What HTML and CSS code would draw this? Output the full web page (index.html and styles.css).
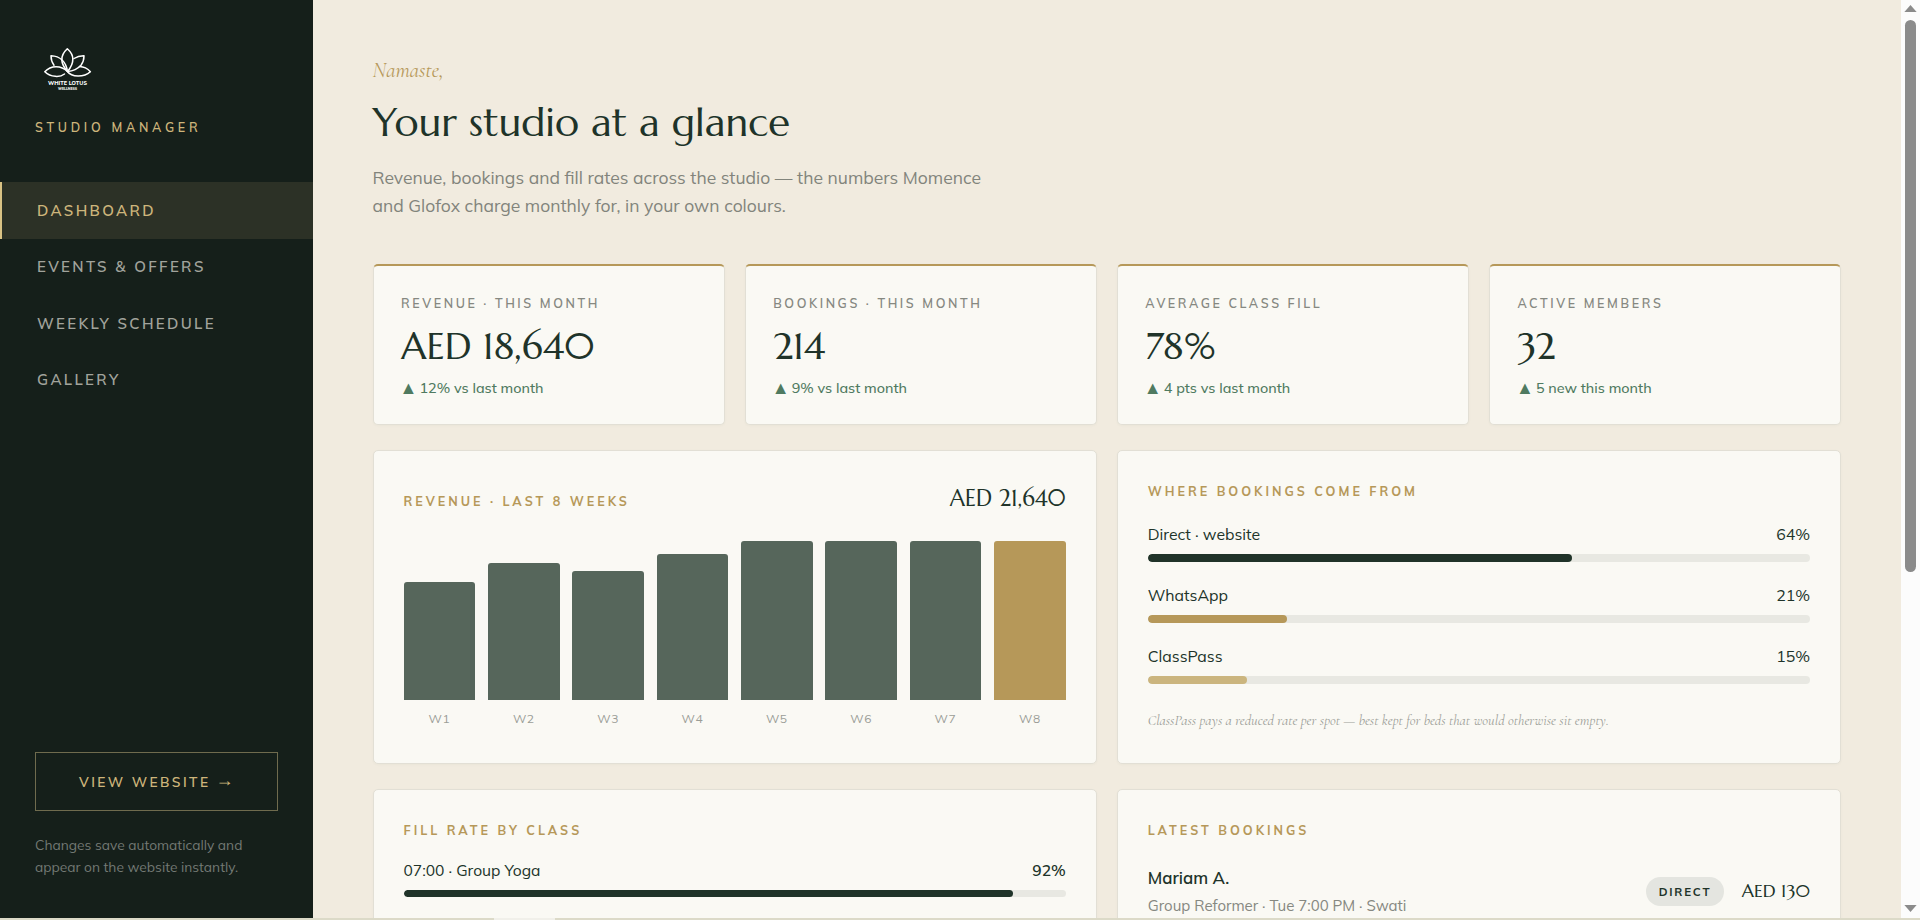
FILE: index.html
```html
<!DOCTYPE html>
<html lang="en">
<head>
<meta charset="utf-8">
<title>Studio Manager</title>
<link rel="stylesheet" href="styles.css">
</head>
<body>
<div class="app">
  <aside class="sidebar">
    <svg class="logo" viewBox="0 0 64 56" fill="none" stroke="#fff" stroke-width="1.5" stroke-linejoin="round" stroke-linecap="round">
      <path d="M32.500 34.500C25 26 25.500 18 32.300 11.700C39.500 18 39.500 26 32.500 34.500"/>
      <path d="M19 28.200C17 25.500 16 22.500 16 18.700C25 19 31 25 32.500 34.500"/>
      <path d="M39 21.500C42 19.500 45.500 18.600 49 18.700C49 22.500 48 25.500 46 28.200C42.500 32 38 34 32.500 34.500"/>
      <path d="M32.500 34.500C26 28 16 28 9.800 34.700C16 40.500 25 40.500 29.500 37"/>
      <path d="M32.500 34.500C36.500 40.500 49 40.500 55.400 34.700C52 31 48.500 29.800 44.500 29.600"/>
      <text class="logo-name" x="32.500" y="48" textLength="39">WHITE LOTUS</text>
      <text class="logo-tag" x="32.500" y="53" textLength="19">WELLNESS</text>
    </svg>
    <p class="brand-sub">STUDIO MANAGER</p>
    <nav class="nav">
      <a class="nav-item active">DASHBOARD</a>
      <a class="nav-item">EVENTS &amp; OFFERS</a>
      <a class="nav-item">WEEKLY SCHEDULE</a>
      <a class="nav-item">GALLERY</a>
    </nav>
    <div class="side-foot">
      <a class="view-btn">VIEW WEBSITE <span class="go">→</span></a>
      <p class="side-note">Changes save automatically and<br>appear on the website instantly.</p>
    </div>
  </aside>
  <main class="main">
    <p class="hello">Namaste,</p>
    <h1 class="title">Your studio at a glance</h1>
    <p class="intro">Revenue, bookings and fill rates across the studio — the numbers Momence<br>and Glofox charge monthly for, in your own colours.</p>
    <section class="stats">
      <article class="stat"><p class="stat-label">REVENUE · THIS MONTH</p><p class="stat-value">AED 18,640</p><p class="stat-delta"><span class="up">▲</span>12% vs last month</p></article>
      <article class="stat"><p class="stat-label">BOOKINGS · THIS MONTH</p><p class="stat-value">214</p><p class="stat-delta"><span class="up">▲</span>9% vs last month</p></article>
      <article class="stat"><p class="stat-label">AVERAGE CLASS FILL</p><p class="stat-value">78%</p><p class="stat-delta"><span class="up">▲</span>4 pts vs last month</p></article>
      <article class="stat"><p class="stat-label">ACTIVE MEMBERS</p><p class="stat-value">32</p><p class="stat-delta"><span class="up">▲</span>5 new this month</p></article>
    </section>
    <section class="panels">
      <article class="panel">
        <header class="chart-head"><h2 class="panel-title">REVENUE · LAST 8 WEEKS</h2><p class="chart-total">AED 21,640</p></header>
        <div class="bars">
          <div class="bar" style="height:118px"></div>
          <div class="bar" style="height:137px"></div>
          <div class="bar" style="height:129px"></div>
          <div class="bar" style="height:146px"></div>
          <div class="bar" style="height:159px"></div>
          <div class="bar" style="height:159px"></div>
          <div class="bar" style="height:159px"></div>
          <div class="bar current" style="height:159px"></div>
        </div>
        <div class="weeks"><p>W1</p><p>W2</p><p>W3</p><p>W4</p><p>W5</p><p>W6</p><p>W7</p><p>W8</p></div>
      </article>
      <article class="panel">
        <h2 class="panel-title">WHERE BOOKINGS COME FROM</h2>
        <div class="meter"><div class="meter-head"><span>Direct · website</span><span>64%</span></div><div class="track"><div class="fill" style="width:64%"></div></div></div>
        <div class="meter"><div class="meter-head"><span>WhatsApp</span><span>21%</span></div><div class="track"><div class="fill gold" style="width:21%"></div></div></div>
        <div class="meter"><div class="meter-head"><span>ClassPass</span><span>15%</span></div><div class="track"><div class="fill sand" style="width:15%"></div></div></div>
        <p class="remark">ClassPass pays a reduced rate per spot — best kept for beds that would otherwise sit empty.</p>
      </article>
      <article class="panel">
        <h2 class="panel-title">FILL RATE BY CLASS</h2>
        <div class="meter compact"><div class="meter-head"><span>07:00 · Group Yoga</span><span class="strong">92%</span></div><div class="track"><div class="fill" style="width:92%"></div></div></div>
      </article>
      <article class="panel">
        <h2 class="panel-title">LATEST BOOKINGS</h2>
        <div class="booking">
          <div class="who"><p class="who-name">Mariam A.</p><p class="who-info">Group Reformer · Tue 7:00 PM · Swati</p></div>
          <span class="pill">DIRECT</span>
          <span class="amount">AED 130</span>
        </div>
      </article>
    </section>
  </main>
  <div class="scroll">
    <svg class="arrow" viewBox="0 0 14 8"><path d="M0 8L7 0L14 8Z" fill="#8b8b8b"/></svg>
    <div class="thumb"></div>
    <svg class="arrow down" viewBox="0 0 14 8"><path d="M0 0L7 8L14 0Z" fill="#8b8b8b"/></svg>
  </div>
</div>
<div class="edge"><div class="edge-gap"></div></div>
</body>
</html>
```
FILE: styles.css
```css
* { box-sizing: border-box; margin: 0; padding: 0; }
body { width: 1920px; height: 920px; overflow: hidden; background: #f1ebdf; color: #203329; font-family: "Mulish", "Noto Sans", sans-serif; }
.app { display: flex; height: 918px; overflow: hidden; }

.sidebar { width: 312.5px; flex: none; background: #151f1a; display: flex; flex-direction: column; padding-top: 37px; }
.logo { width: 64px; height: 56px; margin-left: 35px; flex: none; }
.logo text { fill: #fff; stroke: none; text-anchor: middle; font-family: "Mulish", sans-serif; font-weight: 800; }
.logo-name { font-size: 5.5px; }
.logo-tag { font-size: 3.5px; }
.brand-sub { margin: 24px 0 0 35px; font-size: 12.5px; line-height: 20px; letter-spacing: 3.72px; font-weight: 650; color: #cdb57b; }
.nav { margin-top: 45px; display: flex; flex-direction: column; }
.nav-item { height: 56.5px; padding-left: 35px; border-left: 2px solid transparent; display: flex; align-items: center; font-size: 15px; font-weight: 650; letter-spacing: 2.35px; color: #a1a39c; }
.nav-item.active { background: #2c3126; border-left-color: #d9c284; color: #cdb57b; }
.side-foot { margin-top: auto; padding: 0 35px 40px; }
.view-btn { height: 59px; border: 1px solid #6f6b4e; display: flex; align-items: center; justify-content: center; gap: 5px; font-size: 13.75px; font-weight: 650; letter-spacing: 2.42px; color: #cdb57b; white-space: nowrap; }
.go { font-size: 18px; line-height: 20px; letter-spacing: 0; font-weight: 500; padding-bottom: 3px; }
.side-note { margin-top: 23px; font-size: 13.75px; line-height: 22px; color: #737974; white-space: nowrap; }

.main { flex: 1; padding: 55.5px 60px 0; height: 918px; overflow: hidden; }
.hello { font: italic 400 21.2px/28px "Cormorant Garamond", serif; color: #b69859; }
.title { margin-top: 10.5px; font: 400 40px/56px "Marcellus", serif; color: #203329; }
.intro { margin-top: 13px; font-size: 17.5px; line-height: 28px; color: #82847c; white-space: nowrap; }
.stats { margin-top: 45px; display: grid; grid-template-columns: repeat(4, 1fr); gap: 20px; }
.stat { height: 160.5px; background: #faf9f4; border: 1px solid #e2dfd5; border-top: 2px solid #b69859; border-radius: 5px; padding: 27px 27.5px; box-shadow: 0 1px 3px rgba(32, 51, 41, .03); white-space: nowrap; }
.stat-label { font-size: 12.5px; line-height: 20px; letter-spacing: 2.6px; font-weight: 650; color: #868881; }
.stat-value { margin-top: 10px; font: 400 37.5px/46px "Marcellus", serif; }
.stat-delta { margin-top: 9px; display: flex; align-items: center; gap: 5px; font-size: 14.35px; line-height: 20px; font-weight: 520; color: #4f7a60; }
.up { font-size: 18px; width: 13.5px; text-indent: -1.500px; }

.panels { margin-top: 25.5px; display: grid; grid-template-columns: repeat(2, 1fr); grid-template-rows: 313.5px 313.5px; column-gap: 20px; row-gap: 25.5px; }
.panel { background: #faf9f4; border: 1px solid #e2dfd5; border-radius: 5px; padding: 29.5px 30px; box-shadow: 0 1px 3px rgba(32, 51, 41, .03); white-space: nowrap; }
.panel-title { font-size: 12.55px; line-height: 20px; letter-spacing: 3px; font-weight: 700; color: #b69859; }
.chart-head { display: flex; justify-content: space-between; align-items: baseline; padding-top: .5px; }
.chart-total { font: 400 22.5px/34px "Marcellus", serif; }
.bars { margin-top: 26px; height: 159px; display: flex; align-items: flex-end; gap: 12.5px; }
.bar { flex: 1; background: #56665b; border-radius: 3px 3px 0 0; }
.bar.current { background: #b69859; }
.weeks { margin-top: 10px; display: flex; gap: 12.5px; font-size: 12px; line-height: 18px; color: #9b9d97; text-align: center; letter-spacing: .6px; }
.weeks p { flex: 1; }

.meter { margin-top: 21px; }
.meter-head { display: flex; justify-content: space-between; font-size: 15.8px; line-height: 24px; }
.meter .strong { font-weight: 600; }
.track { margin-top: 8.5px; height: 7.5px; border-radius: 4px; background: #e8e8e2; overflow: hidden; }
.meter.compact { margin-top: 18.5px; }
.meter.compact .track { margin-top: 7.5px; }
.meter.compact .meter-head { font-size: 15.6px; }
.fill { height: 100%; border-radius: 4px; background: #203329; }
.fill.gold { background: #b69859; }
.fill.sand { background: #cbb57e; }
.remark { margin-top: 26.5px; font: italic 400 14.4px/22px "Cormorant Garamond", serif; color: #9b9d97; }

.booking { margin-top: 25px; display: flex; align-items: center; }
.who { flex: 1; }
.who-name { font-size: 16.8px; line-height: 26px; font-weight: 600; }
.who-info { margin-top: 3px; font-size: 15px; line-height: 24px; color: #868881; }
.pill { height: 29px; padding: 0 12.5px 0 13px; border-radius: 15px; background: #e4e5e0; display: flex; align-items: center; font-size: 11.5px; font-weight: 700; letter-spacing: 1.8px; }
.amount { margin-left: 18px; font: 400 18px/24px "Marcellus", serif; padding-bottom: 1px; }

.scroll { width: 19px; flex: none; background: #fcfcfc; display: flex; flex-direction: column; align-items: center; padding: 5px 0 6px; }
.arrow { width: 13px; height: 7px; flex: none; }
.thumb { width: 11px; height: 552px; margin-top: 8px; border-radius: 6px; background: #8b8b8b; }
.arrow.down { margin-top: auto; }
.edge { height: 2px; background: #dcdac8; padding-left: 494px; }
.edge-gap { width: 61px; height: 2px; background: #f1f0ea; }
```
